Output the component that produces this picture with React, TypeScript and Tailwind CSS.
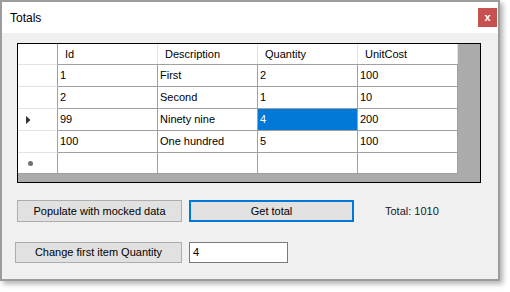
const columns = ['Id', 'Description', 'Quantity', 'UnitCost'];

const rows = [
  ['1', 'First', '2', '100'],
  ['2', 'Second', '1', '10'],
  ['99', 'Ninety nine', '4', '200'],
  ['100', 'One hundred', '5', '100'],
];

function Grid() {
  return (
    <div className="w-[464px] h-[140px] border border-black bg-[#ababab] flex flex-col">
      {/* header row */}
      <div className="flex h-[20px] bg-white w-[440px]">
        <div className="w-[40px] border-r border-[#a0a0a0]" />
        {columns.map((c) => (
          <div
            key={c}
            className="w-[100px] border-r border-[#e3e3e3] pl-[7px] leading-[20px]"
          >
            {c}
          </div>
        ))}
      </div>
      {rows.map((r, i) => (
        <div key={i} className="flex h-[22px] w-[440px] bg-white">
          <div className="w-[40px] border-r border-[#a0a0a0] border-t border-t-[#e3e3e3] flex items-center pl-[8px]">
            {i === 2 && (
              <svg width="5" height="8" viewBox="0 0 5 8">
                <path d="M0 0 L4.5 4 L0 8 Z" fill="#303030" />
              </svg>
            )}
          </div>
          {r.map((v, j) => (
            <div
              key={j}
              className={`w-[100px] border-r border-t border-[#a0a0a0] pl-[2px] leading-[21px] ${
                i === 2 && j === 2 ? 'bg-[#0078d7] text-white' : ''
              }`}
            >
              {v}
            </div>
          ))}
        </div>
      ))}
      <div className="flex h-[22px] w-[440px] bg-white border-b border-[#a0a0a0]">
        <div className="w-[40px] border-r border-[#a0a0a0] border-t border-t-[#e3e3e3] flex items-center pl-[10px]">
          <span className="w-[5px] h-[5px] rounded-full bg-[#707070]" />
        </div>
        {columns.map((c) => (
          <div key={c} className="w-[100px] border-r border-t border-[#a0a0a0]" />
        ))}
      </div>
    </div>
  );
}

export default function App() {
  return (
    <div
      className="w-[510px] h-[292px] bg-white text-[11px] text-black"
      style={{ fontFamily: '"Liberation Sans", Arial, sans-serif' }}
    >
      <div className="w-[500px] h-[281px] border-2 border-[#9c9c9c] flex flex-col shadow-[3px_3px_5px_rgba(0,0,0,0.3)]">
        <div className="h-[31px] bg-white flex items-center justify-between pl-[8px] pr-[1px]">
          <span className="text-[12px]">Totals</span>
          <div className="w-[19px] h-[19px] bg-[#c75050] text-white font-bold text-[11px] flex items-center justify-center leading-none">
            x
          </div>
        </div>
        <div className="flex-1 bg-[#f0f0f0] pl-[15px] pt-[10px]">
          <Grid />
          <div className="flex items-center mt-[17px]">
            <button className="w-[165px] h-[22px] border border-[#adadad] bg-[#e1e1e1]">
              Populate with mocked data
            </button>
            <button className="ml-[7px] w-[165px] h-[22px] border-2 border-[#0078d7] bg-[#e1e1e1]">
              Get total
            </button>
            <span className="ml-[31px] text-[#1a1a2a]">Total: 1010</span>
          </div>
          <div className="flex items-center mt-[20px] -ml-[2px]">
            <button className="w-[167px] h-[21px] border border-[#adadad] bg-[#e1e1e1]">
              Change first item Quantity
            </button>
            <div className="ml-[7px] w-[99px] h-[21px] border border-[#7a7a7a] bg-white pl-[3px] leading-[19px]">
              4
            </div>
          </div>
        </div>
      </div>
    </div>
  );
}
